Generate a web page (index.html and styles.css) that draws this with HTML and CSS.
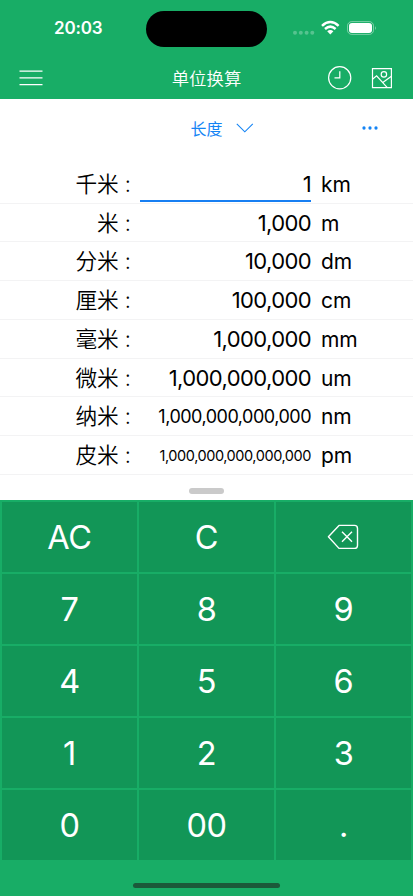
FILE: index.html
```html
<!DOCTYPE html>
<html lang="zh-CN">
<head>
<meta charset="utf-8">
<title>单位换算</title>
<link rel="stylesheet" href="styles.css">
</head>
<body>
<div class="app">
  <header class="top">
    <div class="status">
      <div class="time">20:03</div>
      <div class="island"></div>
      <svg class="indicators" width="88" height="20" viewBox="0 0 88 20">
        <g fill="#fff" fill-opacity=".27"><circle cx="5" cy="14.8" r="2"/><circle cx="10.8" cy="14.8" r="2"/><circle cx="16.6" cy="14.8" r="2"/><circle cx="22.3" cy="14.8" r="2"/></g>
        <g fill="none" stroke="#fff" stroke-width="2.5"><path d="M32 7.8Q40.3 .2 48.6 7.8"/><path d="M35 11Q40.3 6.2 45.6 11"/></g>
        <path d="M37.2 13.2Q40.3 10.7 43.4 13.2L40.3 16.4Z" fill="#fff"/>
        <rect x="57.5" y="3.6" width="26" height="12.8" rx="4.2" fill="none" stroke="#fff" stroke-opacity=".42"/>
        <rect x="59" y="5" width="23" height="10" rx="3" fill="#fff"/>
        <path d="M85 8q1.8 2 0 4.2z" fill="#fff" fill-opacity=".5"/>
      </svg>
    </div>
    <nav class="nav">
      <svg class="menu" width="24" height="18" viewBox="0 0 24 18"><path d="M.5 2.1h23M.5 8.9h23M.5 15.7h23" stroke="#fff" stroke-width="1.2"/></svg>
      <h1 class="title">单位换算</h1>
      <div class="actions">
        <svg width="24" height="24" viewBox="0 0 24 24" fill="none" stroke="#fff" stroke-width="1.2"><circle cx="11.7" cy="11.8" r="11.1"/><path d="M11.8 5.2v6.6H6.5"/></svg>
        <svg width="22" height="22" viewBox="0 0 22 22" fill="none" stroke="#fff" stroke-width="1.2"><path d="M1.5 1.7h18.9v18.9H1.5z"/><circle cx="12.9" cy="7.4" r="2.7"/><path d="M1.5 12.2l4.1-3.3L16.3 20.6M11.8 15.4l8.6-6.1"/></svg>
      </div>
    </nav>
  </header>
  <main class="panel">
    <div class="category">
      <span class="cat-name">长度</span>
      <svg class="chevron" width="18" height="10" viewBox="0 0 18 10"><path d="M.8.8l8 8 8-8" fill="none" stroke="#1484f5" stroke-width="1.1"/></svg>
      <svg class="more" width="16" height="4" viewBox="0 0 16 4"><g fill="#1484f5"><circle cx="2" cy="2" r="1.65"/><circle cx="8" cy="2" r="1.65"/><circle cx="14" cy="2" r="1.65"/></g></svg>
    </div>
    <div class="rows">
      <div class="row"><span class="label">千米 :</span><span class="value active">1</span><span class="unit">km</span></div>
      <div class="row"><span class="label">米 :</span><span class="value">1,000</span><span class="unit">m</span></div>
      <div class="row"><span class="label">分米 :</span><span class="value">10,000</span><span class="unit">dm</span></div>
      <div class="row"><span class="label">厘米 :</span><span class="value">100,000</span><span class="unit">cm</span></div>
      <div class="row"><span class="label">毫米 :</span><span class="value">1,000,000</span><span class="unit">mm</span></div>
      <div class="row"><span class="label">微米 :</span><span class="value">1,000,000,000</span><span class="unit">um</span></div>
      <div class="row"><span class="label">纳米 :</span><span class="value mid">1,000,000,000,000</span><span class="unit">nm</span></div>
      <div class="row"><span class="label">皮米 :</span><span class="value small">1,000,000,000,000,000</span><span class="unit">pm</span></div>
    </div>
    <div class="handle"></div>
  </main>
  <section class="keypad">
    <div class="keys">
      <div class="key">AC</div><div class="key">C</div>
      <div class="key key-icon"><svg width="32" height="26" viewBox="0 0 32 26" fill="none" stroke="#fff" stroke-width="1.4" stroke-linejoin="round"><path d="M1.4 12.7L12 1.4h15.5q3 0 3 3v17q0 3-3 3H12z"/><path d="M15 7.7l10 10M25 7.7l-10 10"/></svg></div>
      <div class="key">7</div><div class="key">8</div><div class="key">9</div>
      <div class="key">4</div><div class="key">5</div><div class="key">6</div>
      <div class="key">1</div><div class="key">2</div><div class="key">3</div>
      <div class="key">0</div><div class="key">00</div><div class="key">.</div>
    </div>
    <div class="home"></div>
  </section>
</div>
</body>
</html>
```
FILE: styles.css
```css
* { box-sizing: border-box; }
body { margin: 0; background: #fff; font-family: Inter, "Noto Sans CJK SC", sans-serif; color: #000; }
.app { width: 413px; height: 896px; display: flex; flex-direction: column; overflow: hidden; }
.top { height: 98.7px; background: #18ad66; color: #fff; flex: none; }
.status { height: 57px; display: grid; grid-template-columns: 146px 121px 1fr; align-items: start; }
.time { padding: 18px 0 0 54px; font-size: 17px; line-height: 21px; font-weight: 600; letter-spacing: -.2px; }
.island { margin-top: 11px; height: 35.5px; border-radius: 18px; background: #000; }
.indicators { margin: 18px 0 0 23px; }
.nav { height: 41px; display: grid; grid-template-columns: 120px 1fr 120px; align-items: center; }
.menu { margin-left: 19px; }
.title { margin: 0; text-align: center; font-size: 17.4px; font-weight: 350; line-height: 26px; padding-top: 2px; }
.actions { display: flex; align-items: center; gap: 19px; padding-left: 35px; }
.panel { height: 401.6px; flex: none; display: flex; flex-direction: column; }
.category { height: 66.4px; flex: none; display: grid; grid-template-columns: 45px 126px 1fr; align-items: start; color: #1484f5; padding: 17.5px 0 0 190.5px; }
.cat-name { font-size: 16px; line-height: 26px; }
.chevron { margin-top: 7px; }
.more { margin-top: 10px; }
.rows { display: flex; flex-direction: column; }
.row { height: 38.7px; display: grid; grid-template-columns: 131px 180px 1fr; align-items: start; border-bottom: 1px solid #f3f3f4; font-size: 22px; line-height: 39px; white-space: nowrap; }
.label { text-align: right; font-size: 21.7px; font-weight: 350; line-height: 39px; }
.value { text-align: right; margin-left: 9px; letter-spacing: -.6px; height: 37.3px; }
.active { border-bottom: 2px solid #177ff2; }
.mid { font-size: 18px; letter-spacing: -.5px; }
.small { font-size: 14.5px; letter-spacing: -.44px; }
.unit { padding-left: 10px; font-size: 21px; letter-spacing: -.1px; line-height: 40px; }
.handle { width: 35px; height: 6px; border-radius: 3px; background: #cacaca; margin: 13.5px auto 0; }
.keypad { flex: 1; background: #18ad66; padding: 1.7px 2px 0; }
.keys { display: grid; grid-template-columns: repeat(3, 1fr); grid-template-rows: repeat(5, 70.1px); gap: 2px; }
.key { display: flex; align-items: center; justify-content: center; background: #129657; color: #fff; font-size: 32.5px; line-height: 40px; font-weight: 380; letter-spacing: -.4px; padding-top: 1px; }
.key-icon { padding: 0 1px 1px 0; }
.home { width: 147px; height: 5px; border-radius: 3px; background: #1b5a3a; margin: 22.3px auto 0; }
```
